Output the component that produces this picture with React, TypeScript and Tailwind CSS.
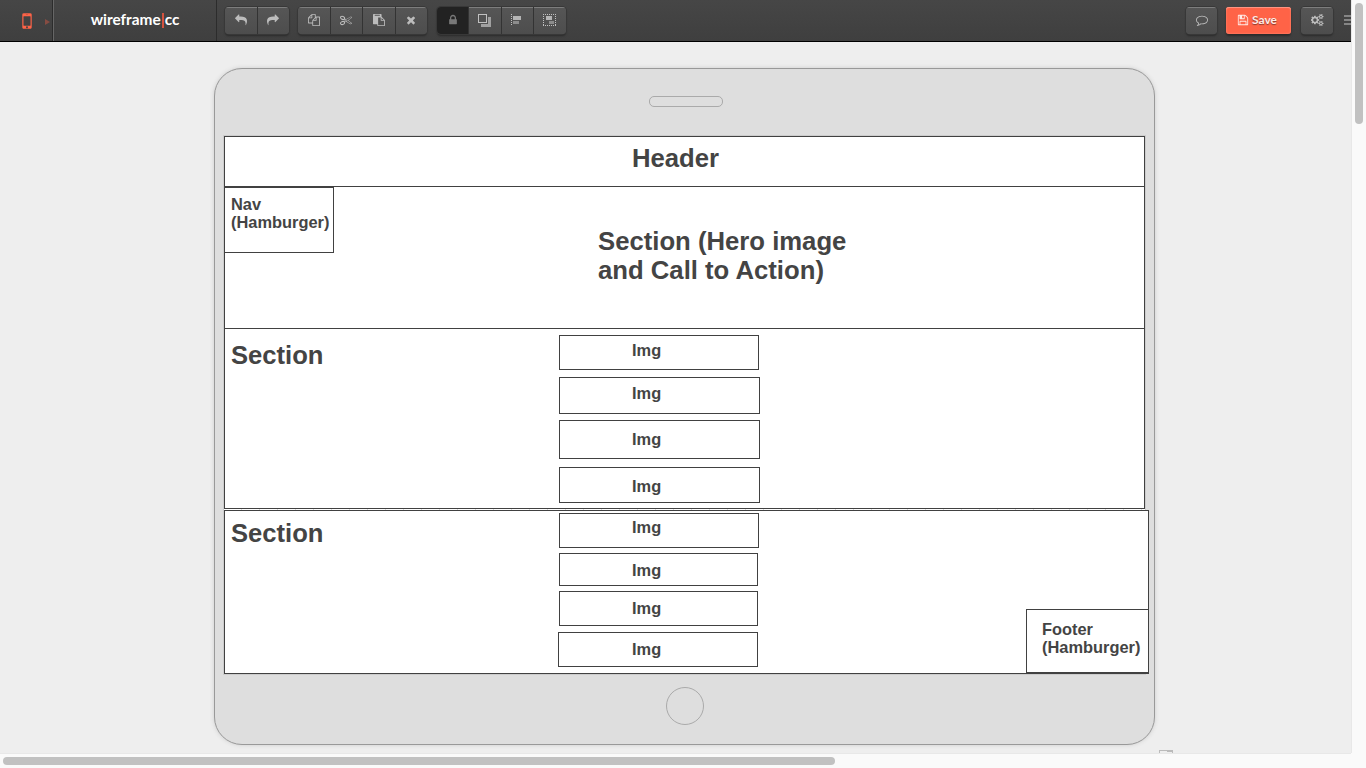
import type { ReactNode } from "react";

const ICONS = {
  mobile:
    "M976 1408q0-33-23.5-56.5t-56.5-23.5-56.5 23.5-23.5 56.5 23.5 56.5 56.5 23.5 56.5-23.5 23.5-56.5zm208-160v-704q0-13-9.5-22.5t-22.5-9.5h-512q-13 0-22.5 9.5t-9.5 22.5v704q0 13 9.5 22.5t22.5 9.5h512q13 0 22.5-9.5t9.5-22.5zm-192-848q0-16-16-16h-160q-16 0-16 16t16 16h160q16 0 16-16zm288-16v1024q0 52-38 90t-90 38h-512q-52 0-90-38t-38-90v-1024q0-52 38-90t90-38h512q52 0 90 38t38 90z",
  redo: "M1792 640q0 26-19 45l-512 512q-19 19-45 19t-45-19-19-45v-256h-224q-98 0-175.5 6t-154 21.5-133 42.5-105.5 69.5-80 101-48.5 138.5-17.5 181q0 55 5 123 0 6 2.5 23.5t2.5 26.5q0 15-8.5 25t-23.5 10q-16 0-28-17-7-9-13-22t-13.5-30-10.5-24q-127-285-127-451 0-199 53-333 162-403 875-403h224v-256q0-26 19-45t45-19 45 19l512 512q19 19 19 45z",
  copy: "M1696 384q40 0 68 28t28 68v1216q0 40-28 68t-68 28h-960q-40 0-68-28t-28-68v-288h-544q-40 0-68-28t-28-68v-672q0-40 20-88t48-76l408-408q28-28 76-48t88-20h416q40 0 68 28t28 68v328q68-40 128-40h416zm-544 213l-299 299h299v-299zm-640-384l-299 299h299v-299zm196 647l316-316v-416h-384v416q0 40-28 68t-68 28h-416v640h512v-256q0-40 20-88t48-76zm956 804v-1152h-384v416q0 40-28 68t-68 28h-416v640h896z",
  cut: "M960 896q26 0 45 19t19 45-19 45-45 19-45-19-19-45 19-45 45-19zm300 64l507 398q28 20 25 56-5 35-35 51l-128 64q-13 7-29 7-17 0-31-8l-690-387-110 66q-8 4-12 5 14 49 10 97-7 77-56 147.5t-132 123.5q-132 84-277 84-136 0-222-78-90-84-79-207 7-76 56-147t131-124q132-84 278-84 83 0 151 31 9-13 22-22l122-73-122-73q-13-9-22-22-68 31-151 31-146 0-278-84-82-53-131-124t-56-147q-5-59 15.5-113t63.5-93q85-79 222-79 145 0 277 84 83 52 132 123t56 148q4 48-10 97 4 1 12 5l110 66 690-387q14-8 31-8 16 0 29 7l128 64q30 16 35 51 3 36-25 56zm-681-260q46-42 21-108t-106-117q-92-59-192-59-74 0-113 36-46 42-21 108t106 117q92 59 192 59 74 0 113-36zm-85 745q81-51 106-117t-21-108q-39-36-113-36-100 0-192 59-81 51-106 117t21 108q39 36 113 36 100 0 192-59zm178-613l96 58v-11q0-36 33-56l14-8-79-44-26 26q-3 3-10 11t-12 12q-2 2-4 3.5t-3 2.5zm224 224l96 32 736-576-128-64-768 431v113l-160 96 9 8q2 2 7 6 4 4 11 12t11 12l26 26zm704 416l128-64-520-408-177 138q-2 3-13 7z",
  paste:
    "M768 1664h896v-640h-416q-40 0-68-28t-28-68v-416h-384v1152zm256-1440v-64q0-13-9.5-22.5t-22.5-9.5h-704q-13 0-22.5 9.5t-9.5 22.5v64q0 13 9.5 22.5t22.5 9.5h704q13 0 22.5-9.5t9.5-22.5zm256 672h299l-299-299v299zm512 128v672q0 40-28 68t-68 28h-960q-40 0-68-28t-28-68v-160h-544q-40 0-68-28t-28-68v-1344q0-40 28-68t68-28h1088q40 0 68 28t28 68v328q21 13 36 28l408 408q28 28 48 76t20 88z",
  remove:
    "M1490 1322q0 40-28 68l-136 136q-28 28-68 28t-68-28l-294-294-294 294q-28 28-68 28t-68-28l-136-136q-28-28-28-68t28-68l294-294-294-294q-28-28-28-68t28-68l136-136q28-28 68-28t68 28l294 294 294-294q28-28 68-28t68 28l136 136q28 28 28 68t-28 68l-294 294 294 294q28 28 28 68z",
  lock: "M640 768h512v-192q0-106-75-181t-181-75-181 75-75 181v192zm832 96v576q0 40-28 68t-68 28h-960q-40 0-68-28t-28-68v-576q0-40 28-68t68-28h32v-192q0-184 132-316t316-132 316 132 132 316v192h32q40 0 68 28t28 68z",
  comment:
    "M896 384q-204 0-381.5 69.5t-282 187.5-104.5 255q0 112 71.5 213.5t201.5 175.5l87 50-27 96q-24 91-70 172 152-63 275-171l43-38 57 6q69 8 130 8 204 0 381.5-69.5t282-187.5 104.5-255-104.5-255-282-187.5-381.5-69.5zm896 512q0 174-120 321.5t-326 233-450 85.5q-70 0-145-8-198 175-460 242-49 14-114 22h-5q-15 0-27-10.5t-16-27.5v-1q-3-4-.5-12t2-10 4.5-9.5l6-9 7-8.5 8-9q7-8 31-34.5t34.5-38 31-39.5 32.5-51 27-59 26-76q-157-89-247.5-220t-90.5-281q0-174 120-321.5t326-233 450-85.5 450 85.5 326 233 120 321.5z",
  save: "M512 1536h768v-384h-768v384zm896 0h128v-896q0-14-10-38.5t-20-34.5l-281-281q-10-10-34-20t-39-10v416q0 40-28 68t-68 28h-576q-40 0-68-28t-28-68v-416h-128v1280h128v-416q0-40 28-68t68-28h832q40 0 68 28t28 68v416zm-384-928v-320q0-13-9.5-22.5t-22.5-9.5h-192q-13 0-22.5 9.5t-9.5 22.5v320q0 13 9.5 22.5t22.5 9.5h192q13 0 22.5-9.5t9.5-22.5zm640 32v928q0 40-28 68t-68 28h-1344q-40 0-68-28t-28-68v-1344q0-40 28-68t68-28h928q40 0 88 20t76 48l280 280q28 28 48 76t20 88z",
  cogs: "M832 896q0-106-75-181t-181-75-181 75-75 181 75 181 181 75 181-75 75-181zm768 512q0-52-38-90t-90-38-90 38-38 90q0 53 37.5 90.5t90.5 37.5 90.5-37.5 37.5-90.5zm0-1024q0-52-38-90t-90-38-90 38-38 90q0 53 37.5 90.5t90.5 37.5 90.5-37.5 37.5-90.5zm-384 421v185q0 10-7 19.5t-16 10.5l-155 24q-11 35-32 76 34 48 90 115 7 11 7 20 0 12-7 19-23 30-82.5 89.5t-78.5 59.5q-11 0-21-7l-115-90q-37 19-77 31-11 108-23 155-7 24-30 24h-186q-11 0-20-7.5t-10-17.5l-23-153q-34-10-75-31l-118 89q-7 7-20 7-11 0-21-8-144-133-144-160 0-9 7-19 10-14 41-53t47-61q-23-44-35-82l-152-24q-10-1-17-9.5t-7-19.5v-185q0-10 7-19.5t16-10.5l155-24q11-35 32-76-34-48-90-115-7-11-7-20 0-12 7-20 22-30 82-89t79-59q11 0 21 7l115 90q34-18 77-32 11-108 23-154 7-24 30-24h186q11 0 20 7.5t10 17.5l23 153q34 10 75 31l118-89q8-7 20-7 11 0 21 8 144 133 144 160 0 8-7 19-12 16-42 54t-45 60q23 48 34 82l152 23q10 2 17 10.5t7 19.5zm640 533v140q0 16-149 31-12 27-30 52 51 113 51 138 0 4-4 7-122 71-124 71-8 0-46-47t-52-68q-20 2-30 2t-30-2q-14 21-52 68t-46 47q-2 0-124-71-4-3-4-7 0-25 51-138-18-25-30-52-149-15-149-31v-140q0-16 149-31 13-29 30-52-51-113-51-138 0-4 4-7 4-2 35-20t59-34 30-16q8 0 46 46.5t52 67.5q20-2 30-2t30 2q51-71 92-112l6-2q4 0 124 70 4 3 4 7 0 25-51 138 17 23 30 52 149 15 149 31zm0-1024v140q0 16-149 31-12 27-30 52 51 113 51 138 0 4-4 7-122 71-124 71-8 0-46-47t-52-68q-20 2-30 2t-30-2q-14 21-52 68t-46 47q-2 0-124-71-4-3-4-7 0-25 51-138-18-25-30-52-149-15-149-31v-140q0-16 149-31 13-29 30-52-51-113-51-138 0-4 4-7 4-2 35-20t59-34 30-16q8 0 46 46.5t52 67.5q20-2 30-2t30 2q51-71 92-112l6-2q4 0 124 70 4 3 4 7 0 25-51 138 17 23 30 52 149 15 149 31z",
};

function Icon({ name, className = "size-3", viewBox = "0 0 1792 1792" }: { name: keyof typeof ICONS; className?: string; viewBox?: string }) {
  return (
    <svg viewBox={viewBox} fill="currentColor" className={className}>
      <path d={ICONS[name]} />
    </svg>
  );
}

function ButtonGroup({ className, children }: { className: string; children: ReactNode }) {
  return (
    <div
      className={`flex h-[27px] divide-x divide-[#333] overflow-hidden rounded-[4px] bg-[#525252] text-[#bcbcbc] shadow-[0_0_0_1px_#383838,0_2px_2px_#2b2b2b] ${className}`}
    >
      {children}
    </div>
  );
}

function ToolButton({ label, active = false, children }: { label: string; active?: boolean; children: ReactNode }) {
  return (
    <button
      aria-label={label}
      className={
        active
          ? "flex w-8 shrink-0 items-center justify-center bg-[#222] pb-px text-[#787878]"
          : "flex flex-1 items-center justify-center bg-gradient-to-b from-[#565656] to-[#4d4d4d] pb-px shadow-[inset_0_1px_0_#7d7d7d]"
      }
    >
      {children}
    </button>
  );
}

function Toolbar() {
  return (
    <header className="flex h-[42px] w-full shrink-0 items-start overflow-hidden border-b border-black bg-gradient-to-b from-[#464646] to-[#3f3f3f]">
      <div className="flex h-full w-[53px] items-center border-r border-[#2c2c2c] pl-4">
        <Icon name="mobile" className="size-[22px] text-[#ff6347]" />
        <svg viewBox="0 0 5 6" className="ml-[7px] mt-[3px] h-1.5 w-[5px] fill-[#864c42]">
          <path d="M0 0L5 3L0 6Z" />
        </svg>
      </div>
      <div className="flex h-full w-[164px] items-center justify-center border-l border-r border-l-[#666] border-r-[#2c2c2c] pb-px font-['Lato'] text-[15.4px] font-bold text-white">
        <span>wireframe</span>
        <span className="mx-px h-[15px] w-0.5 bg-[#d5523f]" />
        <span>cc</span>
      </div>
      <ButtonGroup className="ml-2 mt-[7px] w-16">
        <ToolButton label="Undo">
          <Icon name="redo" className="size-3 -scale-x-100" />
        </ToolButton>
        <ToolButton label="Redo">
          <Icon name="redo" />
        </ToolButton>
      </ButtonGroup>
      <ButtonGroup className="ml-[9px] mt-[7px] w-[129px]">
        <ToolButton label="Copy">
          <Icon name="copy" />
        </ToolButton>
        <ToolButton label="Cut">
          <Icon name="cut" />
        </ToolButton>
        <ToolButton label="Paste">
          <Icon name="paste" />
        </ToolButton>
        <ToolButton label="Delete">
          <Icon name="remove" />
        </ToolButton>
      </ButtonGroup>
      <ButtonGroup className="ml-[10px] mt-[7px] w-[129px]">
        <ToolButton label="Lock" active>
          <Icon name="lock" />
        </ToolButton>
        <ToolButton label="Order">
          <svg viewBox="0 0 13 13" className="mr-px size-[13px]" shapeRendering="crispEdges">
            <path d="M4 3h9v10H3v-3h7V3z" fill="#a0a0a0" />
            <rect x=".5" y=".5" width="8" height="8" fill="#525252" stroke="#c0c0c0" />
          </svg>
        </ToolButton>
        <ToolButton label="Align">
          <svg viewBox="0 0 11 12" className="mr-0.5 h-3 w-[11px]" shapeRendering="crispEdges">
            <path d="M.5 0v12" stroke="#c0c0c0" strokeDasharray="1 1" />
            <rect x="2" y="2" width="8" height="4" fill="#b4b4b4" />
            <rect x="2" y="7" width="6" height="3" fill="#8c8c8c" />
          </svg>
        </ToolButton>
        <ToolButton label="Group">
          <svg viewBox="0 0 13 12" className="mr-0.5 h-3 w-[13px]" shapeRendering="crispEdges">
            <path d="M0 .5h13M0 11.5h13M.5 0v12M12.5 0v12" stroke="#c0c0c0" strokeDasharray="1 1" />
            <rect x="3" y="2" width="6" height="4" fill="#b4b4b4" />
            <rect x="6" y="7" width="5" height="3" fill="#8c8c8c" />
          </svg>
        </ToolButton>
      </ButtonGroup>
      <ButtonGroup className="ml-auto mt-[7px] w-[31px]">
        <ToolButton label="Comments">
          <Icon name="comment" />
        </ToolButton>
      </ButtonGroup>
      <button className="ml-[9px] mt-[7px] flex h-[27px] w-[65px] items-center justify-center gap-[3px] rounded-[3px] bg-[#ff6347] pb-px pr-[3px] font-['Lato'] text-xs font-bold text-[#ffeae6] shadow-[inset_0_1px_0_#ff9482,inset_0_0_2px_#ff9482,0_2px_2px_#2b2b2b]">
        <Icon name="save" className="size-3" />
        <span className="[text-shadow:0_1px_1px_#8a3a2c]">Save</span>
      </button>
      <ButtonGroup className="ml-[10px] mt-[7px] w-8">
        <ToolButton label="Settings">
          <Icon name="cogs" viewBox="0 0 1920 1792" className="h-3 w-[13px]" />
        </ToolButton>
      </ButtonGroup>
      <div className="ml-[11px] mt-[15px] flex w-[7px] flex-col gap-0.5">
        <span className="h-0.5 bg-[#858585]" />
        <span className="h-0.5 bg-[#858585]" />
        <span className="h-0.5 bg-[#858585]" />
      </div>
    </header>
  );
}

function ImgBox({ className }: { className: string }) {
  return <div className={`shrink-0 border border-[#414141] text-[16.4px] leading-[18px] ${className}`}>Img</div>;
}

function Tablet() {
  return (
    <div className="ml-[214px] mt-[26px] flex h-[677px] w-[941px] shrink-0 flex-col rounded-[28px] border border-[#999] bg-[#dedede] pl-[9px] font-['Liberation_Sans',sans-serif] font-bold text-[#444] shadow-[0_0_4px_#ccc]">
      <div className="ml-[425px] mt-[27px] h-[11px] w-[74px] shrink-0 rounded-[5px] border border-[#aaa]" />
      <div className="mt-[29px] w-[921px] shrink-0 bg-white shadow-[0_0_0_1px_#ccc]">
        <div className="h-[51px] border border-[#414141] pl-[407px] pt-[7px] text-[25.7px] leading-[29px]">Header</div>
        <div className="-mt-px flex h-[143px] items-start border border-[#414141]">
          <div className="-ml-px h-[66px] w-[110px] shrink-0 whitespace-nowrap border border-[#414141] pl-[6px] pt-[7px] text-[16.4px] leading-[18px]">
            Nav
            <br />
            (Hamburger)
          </div>
          <p className="ml-[264px] mt-[40px] text-[25.7px] leading-[29px]">
            Section (Hero image
            <br />
            and Call to Action)
          </p>
        </div>
        <div className="-mt-px flex h-[181px] items-start border border-[#414141]">
          <h2 className="w-[334px] shrink-0 pl-[6px] pt-[12px] text-[25.6px] leading-[29px]">Section</h2>
          <div className="flex flex-col pt-[6px]">
            <ImgBox className="h-[35px] w-[200px] pl-[72px] pt-[5px]" />
            <ImgBox className="mt-[7px] h-[37px] w-[201px] pl-[72px] pt-[6px]" />
            <ImgBox className="mt-[6px] h-[39px] w-[201px] pl-[72px] pt-[9px]" />
            <ImgBox className="mt-[8px] h-[36px] w-[201px] pl-[72px] pt-[9px]" />
          </div>
        </div>
        <div className="h-px bg-[repeating-linear-gradient(90deg,#fff_0_17px,#ddd_17px_18px)]" />
        <div className="flex h-[164px] w-[925px] items-start border border-[#414141] bg-white">
          <h2 className="w-[334px] shrink-0 pl-[6px] pt-[8px] text-[25.6px] leading-[29px]">Section</h2>
          <div className="flex flex-col pt-[2px]">
            <ImgBox className="h-[35px] w-[200px] pl-[72px] pt-[4px]" />
            <ImgBox className="mt-[5px] h-[33px] w-[199px] pl-[72px] pt-[7px]" />
            <ImgBox className="mt-[5px] h-[35px] w-[199px] pl-[72px] pt-[7px]" />
            <ImgBox className="-ml-px mt-[6px] h-[35px] w-[200px] pl-[73px] pt-[7px]" />
          </div>
          <div className="-mr-px ml-auto h-[64px] w-[123px] self-end whitespace-nowrap border border-[#414141] pl-[15px] pt-[10px] text-[16.4px] leading-[18px]">
            Footer
            <br />
            (Hamburger)
          </div>
        </div>
      </div>
      <div className="ml-[442px] mt-[13px] size-[38px] shrink-0 rounded-full border border-[#aaa]" />
    </div>
  );
}

export default function App() {
  return (
    <div className="grid h-[768px] w-[1366px] grid-cols-[1351px_15px] grid-rows-[753px_15px] overflow-hidden bg-[#fafafa]">
      <div className="flex min-w-0 flex-col overflow-hidden bg-[#eee]">
        <Toolbar />
        <Tablet />
        <svg viewBox="0 0 14 4" className="ml-[1159px] mt-[5px] h-1 w-3.5 shrink-0" shapeRendering="crispEdges">
          <path d="M.5 4V.5H13V4M8 1.5h5" fill="none" stroke="#bbb" />
        </svg>
      </div>
      <div className="border-l border-[#e8e8e8] pl-[3px] pt-[3px]">
        <div className="h-[121px] w-2 rounded-full bg-[#c1c1c1]" />
      </div>
      <div className="border-t border-[#e8e8e8] pl-[3px] pt-[3px]">
        <div className="h-2 w-[832px] rounded-full bg-[#c1c1c1]" />
      </div>
    </div>
  );
}
